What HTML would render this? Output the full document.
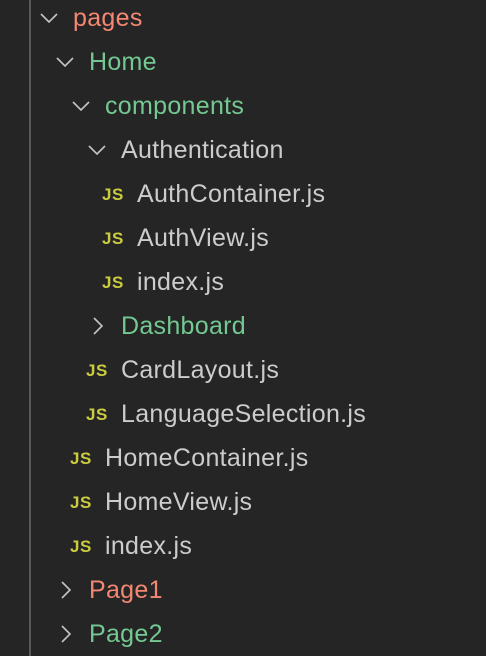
<!DOCTYPE html><html><head><style>
body{margin:0;background:#252526;width:486px;height:656px;overflow:hidden;position:relative;font-family:"Liberation Sans",sans-serif;}
.line{position:absolute;left:29px;top:0;width:2px;height:656px;background:#585858;}
.r{position:absolute;height:44px;line-height:44px;font-size:25px;letter-spacing:0.3px;color:#cccccc;white-space:nowrap;margin-top:1px}
.red{color:#f48771}.grn{color:#73c991}
.ch{position:absolute;top:14px;width:18px;height:16px;}
.js{position:absolute;font-size:17px;font-weight:bold;color:#cbcb41;letter-spacing:0.5px;margin-top:2px}
</style></head><body>
<div class="line"></div>
<div class="r red" style="top:-5px;left:73px">pages</div>
<svg class="ch" style="left:40px;top:10px" viewBox="0 0 18 16"><path d="M1 4 L9 12 L17 4" fill="none" stroke="#c5c5c5" stroke-width="1.6"/></svg>
<div class="r grn" style="top:39px;left:89px">Home</div>
<svg class="ch" style="left:56px;top:54px" viewBox="0 0 18 16"><path d="M1 4 L9 12 L17 4" fill="none" stroke="#c5c5c5" stroke-width="1.6"/></svg>
<div class="r grn" style="top:83px;left:105px">components</div>
<svg class="ch" style="left:72px;top:98px" viewBox="0 0 18 16"><path d="M1 4 L9 12 L17 4" fill="none" stroke="#c5c5c5" stroke-width="1.6"/></svg>
<div class="r" style="top:127px;left:121px">Authentication</div>
<svg class="ch" style="left:88px;top:142px" viewBox="0 0 18 16"><path d="M1 4 L9 12 L17 4" fill="none" stroke="#c5c5c5" stroke-width="1.6"/></svg>
<div class="r js" style="top:171px;left:102px">JS</div><div class="r" style="top:171px;left:137px">AuthContainer.js</div>
<div class="r js" style="top:215px;left:102px">JS</div><div class="r" style="top:215px;left:137px">AuthView.js</div>
<div class="r js" style="top:259px;left:102px">JS</div><div class="r" style="top:259px;left:137px">index.js</div>
<div class="r grn" style="top:303px;left:121px">Dashboard</div>
<svg class="ch" style="left:90px;top:317px;width:16px;height:18px" viewBox="0 0 16 18"><path d="M4 1 L12 9 L4 17" fill="none" stroke="#c5c5c5" stroke-width="1.6"/></svg>
<div class="r js" style="top:347px;left:86px">JS</div><div class="r" style="top:347px;left:121px">CardLayout.js</div>
<div class="r js" style="top:391px;left:86px">JS</div><div class="r" style="top:391px;left:121px">LanguageSelection.js</div>
<div class="r js" style="top:435px;left:70px">JS</div><div class="r" style="top:435px;left:105px">HomeContainer.js</div>
<div class="r js" style="top:479px;left:70px">JS</div><div class="r" style="top:479px;left:105px">HomeView.js</div>
<div class="r js" style="top:523px;left:70px">JS</div><div class="r" style="top:523px;left:105px">index.js</div>
<div class="r red" style="top:567px;left:89px">Page1</div>
<svg class="ch" style="left:58px;top:581px;width:16px;height:18px" viewBox="0 0 16 18"><path d="M4 1 L12 9 L4 17" fill="none" stroke="#c5c5c5" stroke-width="1.6"/></svg>
<div class="r grn" style="top:611px;left:89px">Page2</div>
<svg class="ch" style="left:58px;top:625px;width:16px;height:18px" viewBox="0 0 16 18"><path d="M4 1 L12 9 L4 17" fill="none" stroke="#c5c5c5" stroke-width="1.6"/></svg>
</body></html>
